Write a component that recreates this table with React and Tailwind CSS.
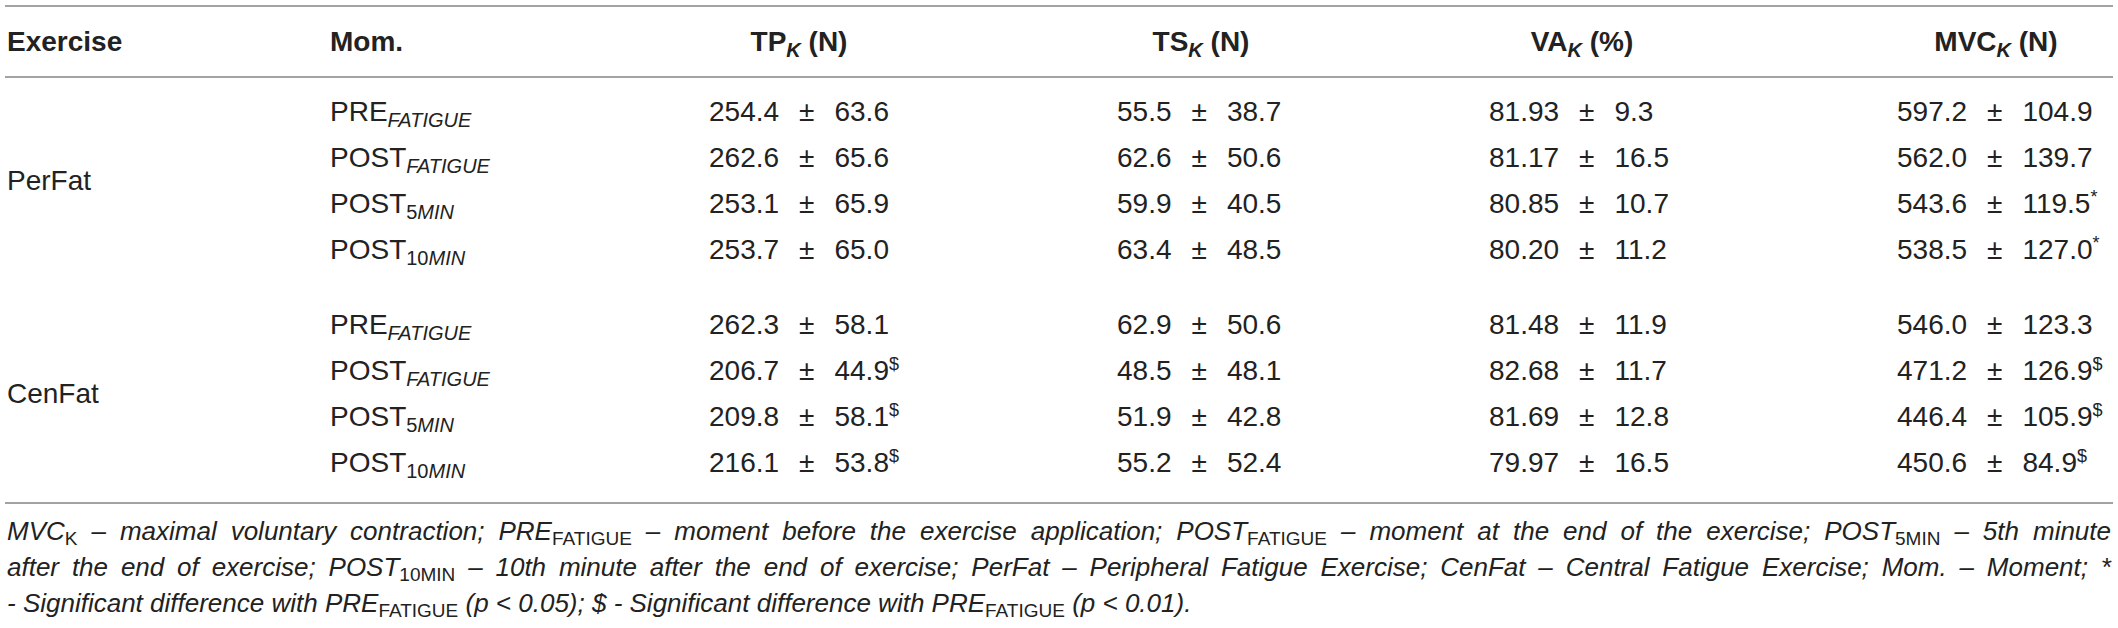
import React from 'react';

const groups = [
  {
    name: 'PerFat',
    rows: [
      { pre: 'PRE', sub: 'FATIGUE', tp: ['254.4', '63.6'], ts: ['55.5', '38.7'], va: ['81.93', '9.3'], mvc: ['597.2', '104.9'] },
      { pre: 'POST', sub: 'FATIGUE', tp: ['262.6', '65.6'], ts: ['62.6', '50.6'], va: ['81.17', '16.5'], mvc: ['562.0', '139.7'] },
      { pre: 'POST', num: '5', sub: 'MIN', tp: ['253.1', '65.9'], ts: ['59.9', '40.5'], va: ['80.85', '10.7'], mvc: ['543.6', '119.5', '*'] },
      { pre: 'POST', num: '10', sub: 'MIN', tp: ['253.7', '65.0'], ts: ['63.4', '48.5'], va: ['80.20', '11.2'], mvc: ['538.5', '127.0', '*'] },
    ],
  },
  {
    name: 'CenFat',
    rows: [
      { pre: 'PRE', sub: 'FATIGUE', tp: ['262.3', '58.1'], ts: ['62.9', '50.6'], va: ['81.48', '11.9'], mvc: ['546.0', '123.3'] },
      { pre: 'POST', sub: 'FATIGUE', tp: ['206.7', '44.9', '$'], ts: ['48.5', '48.1'], va: ['82.68', '11.7'], mvc: ['471.2', '126.9', '$'] },
      { pre: 'POST', num: '5', sub: 'MIN', tp: ['209.8', '58.1', '$'], ts: ['51.9', '42.8'], va: ['81.69', '12.8'], mvc: ['446.4', '105.9', '$'] },
      { pre: 'POST', num: '10', sub: 'MIN', tp: ['216.1', '53.8', '$'], ts: ['55.2', '52.4'], va: ['79.97', '16.5'], mvc: ['450.6', '84.9', '$'] },
    ],
  },
];

const Value = ({ v }) => (
  <span className="whitespace-nowrap">
    {v[0]}
    <span className="mx-[20px]">±</span>
    {v[1]}
    {v[2] && <span className="text-[18px] leading-none align-[10px]">{v[2]}</span>}
  </span>
);

const Moment = ({ r }) => (
  <span className="whitespace-nowrap">
    {r.pre}
    <span className="text-[20px] leading-none align-[-6px]">
      {r.num}
      <span className="italic">{r.sub}</span>
    </span>
  </span>
);

const Head = ({ label, unit, w }) => (
  <span className={`inline-block text-center whitespace-nowrap ${w}`}>
    {label}
    <span className="text-[20px] italic leading-none align-[-6px]">K</span> {unit}
  </span>
);

// footnote subscript
const Fs = ({ children }) => (
  <span className="not-italic text-[19px] leading-none align-[-5px]">{children}</span>
);

const App = () => {
  return (
    <div className="w-[2118px] h-[628px] bg-white px-[5px] pt-[5px] text-[#222] font-['Liberation_Sans',Arial,sans-serif]">
      {/* Header */}
      <div className="grid grid-cols-[325px_379px_408px_372px_408px_1fr] h-[73px] items-center border-y-2 border-[#a3a3a3] text-[28px] font-bold">
        <div className="pl-[2px]">Exercise</div>
        <div>Mom.</div>
        <div><Head label="TP" unit="(N)" w="w-[180px]" /></div>
        <div><Head label="TS" unit="(N)" w="w-[168px]" /></div>
        <div><Head label="VA" unit="(%)" w="w-[186px]" /></div>
        <div><Head label="MVC" unit="(N)" w="w-[198px]" /></div>
      </div>

      {/* Body */}
      <div className="flex flex-col gap-[29px] pt-[11px] pb-[16px] border-b-2 border-[#a3a3a3] text-[28px]">
        {groups.map((g) => (
          <div key={g.name} className="flex">
            <div className="w-[325px] flex items-center pl-[2px]">{g.name}</div>
            <div className="flex-1 flex flex-col">
              {g.rows.map((r, i) => (
                <div key={i} className="grid grid-cols-[379px_408px_372px_408px_1fr] h-[46px] items-center">
                  <div><Moment r={r} /></div>
                  <div><Value v={r.tp} /></div>
                  <div><Value v={r.ts} /></div>
                  <div><Value v={r.va} /></div>
                  <div><Value v={r.mvc} /></div>
                </div>
              ))}
            </div>
          </div>
        ))}
      </div>

      {/* Footnote */}
      <div className="pt-[9px] text-[26px] italic leading-[36px] px-[2px]">
        <div className="whitespace-nowrap text-justify [text-align-last:justify]">
          MVC<Fs>K</Fs> – maximal voluntary contraction; PRE<Fs>FATIGUE</Fs> – moment before the exercise application; POST<Fs>FATIGUE</Fs> – moment at the end of the exercise; POST<Fs>5MIN</Fs> – 5th minute
        </div>
        <div className="whitespace-nowrap text-justify [text-align-last:justify]">
          after the end of exercise; POST<Fs>10MIN</Fs> – 10th minute after the end of exercise; PerFat – Peripheral Fatigue Exercise; CenFat – Central Fatigue Exercise; Mom. – Moment; *
        </div>
        <div className="whitespace-nowrap">
          - Significant difference with PRE<Fs>FATIGUE</Fs> (p &lt; 0.05); $ - Significant difference with PRE<Fs>FATIGUE</Fs> (p &lt; 0.01).
        </div>
      </div>
    </div>
  );
};

export default App;
